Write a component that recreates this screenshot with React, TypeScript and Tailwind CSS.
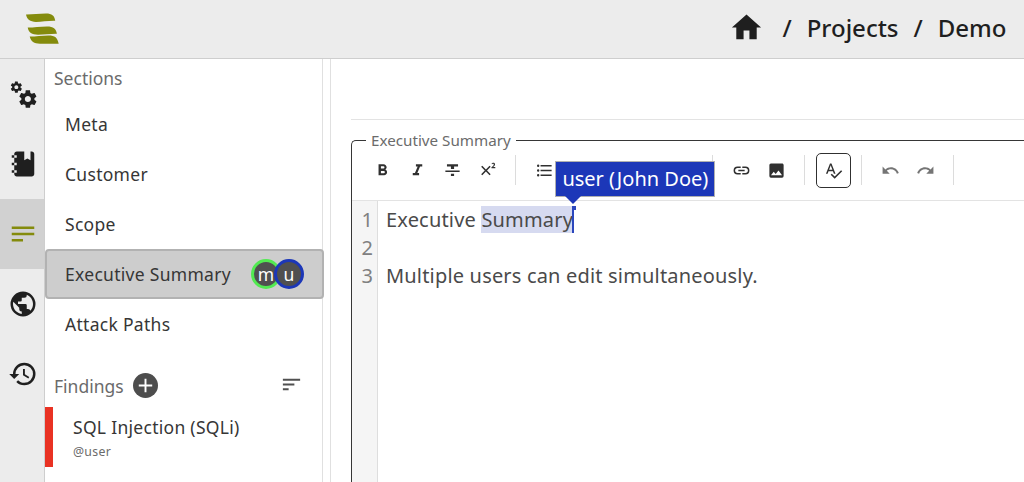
import type { ReactNode } from 'react';

const icons = {
  home: 'M10,20V14H14V20H19V12H22L12,3L2,12H5V20H10Z',
  cogs: 'M15.9,18.45C17.25,18.45 18.35,17.35 18.35,16C18.35,14.65 17.25,13.55 15.9,13.55C14.54,13.55 13.45,14.65 13.45,16C13.45,17.35 14.54,18.45 15.9,18.45M21.1,16.68L22.58,17.84C22.71,17.95 22.75,18.13 22.66,18.29L21.26,20.71C21.17,20.86 21,20.92 20.83,20.86L19.09,20.16C18.73,20.44 18.33,20.67 17.91,20.85L17.64,22.7C17.62,22.87 17.47,23 17.3,23H14.5C14.32,23 14.18,22.87 14.15,22.7L13.89,20.85C13.46,20.67 13.07,20.44 12.71,20.16L10.96,20.86C10.81,20.92 10.62,20.86 10.54,20.71L9.14,18.29C9.05,18.13 9.09,17.95 9.22,17.84L10.7,16.68L10.65,16L10.7,15.31L9.22,14.16C9.09,14.05 9.05,13.86 9.14,13.71L10.54,11.29C10.62,11.13 10.81,11.07 10.96,11.13L12.71,11.84C13.07,11.56 13.46,11.32 13.89,11.15L14.15,9.29C14.18,9.13 14.32,9 14.5,9H17.3C17.47,9 17.62,9.13 17.64,9.29L17.91,11.15C18.33,11.32 18.73,11.56 19.09,11.84L20.83,11.13C21,11.07 21.17,11.13 21.26,11.29L22.66,13.71C22.75,13.86 22.71,14.05 22.58,14.16L21.1,15.31L21.15,16L21.1,16.68M6.69,8.07C7.56,8.07 8.26,7.37 8.26,6.5C8.26,5.63 7.56,4.92 6.69,4.92C5.82,4.92 5.11,5.63 5.11,6.5C5.11,7.37 5.82,8.07 6.69,8.07M10.03,6.94L11,7.68C11.07,7.75 11.09,7.87 11.03,7.97L10.13,9.53C10.08,9.63 9.96,9.67 9.86,9.63L8.74,9.18L8,9.62L7.81,10.81C7.79,10.92 7.7,11 7.59,11H5.79C5.67,11 5.58,10.92 5.56,10.81L5.4,9.62L4.64,9.18L3.52,9.63C3.41,9.67 3.3,9.63 3.24,9.53L2.34,7.97C2.28,7.87 2.31,7.75 2.39,7.68L3.34,6.94L3.31,6.5L3.34,6.06L2.39,5.32C2.31,5.25 2.28,5.13 2.34,5.03L3.24,3.47C3.3,3.37 3.41,3.33 3.52,3.37L4.63,3.82L5.4,3.38L5.56,2.19C5.58,2.08 5.67,2 5.79,2H7.59C7.7,2 7.79,2.08 7.81,2.19L8,3.38L8.74,3.82L9.86,3.37C9.96,3.33 10.08,3.37 10.13,3.47L11.03,5.03C11.09,5.13 11.07,5.25 11,5.32L10.03,6.06L10.06,6.5L10.03,6.94Z',
  notebook: 'M3,7V5H5V4C5,2.89 5.9,2 7,2H13V9L15.5,7.5L18,9V2H19C20.05,2 21,2.95 21,4V20C21,21.05 20.05,22 19,22H7C5.95,22 5,21.05 5,20V19H3V17H5V13H3V11H5V7H3M7,11H5V13H7V11M7,7V5H5V7H7M7,19V17H5V19H7Z',
  text: 'M21,6V8H3V6H21M3,18H12V16H3V18M3,13H21V11H3V13Z',
  earth: 'M17.9,17.39C17.64,16.59 16.89,16 16,16H15V13A1,1 0 0,0 14,12H8V10H10A1,1 0 0,0 11,9V7H13A2,2 0 0,0 15,5V4.59C17.93,5.77 20,8.64 20,12C20,14.08 19.2,15.97 17.9,17.39M11,19.93C7.05,19.44 4,16.08 4,12C4,11.38 4.08,10.78 4.21,10.21L9,15V16A2,2 0 0,0 11,18M12,2A10,10 0 0,0 2,12A10,10 0 0,0 12,22A10,10 0 0,0 22,12A10,10 0 0,0 12,2Z',
  history: 'M13.5,8H12V13L16.28,15.54L17,14.33L13.5,12.25V8M13,3A9,9 0 0,0 4,12H1L4.96,16.03L9,12H6A7,7 0 0,1 13,5A7,7 0 0,1 20,12A7,7 0 0,1 13,19C11.07,19 9.32,18.21 8.06,16.94L6.64,18.36C8.27,20 10.5,21 13,21A9,9 0 0,0 22,12A9,9 0 0,0 13,3',
  plus: 'M19,13H13V19H11V13H5V11H11V5H13V11H19V13Z',
  sort: 'M3,13H15V11H3M3,6V8H21V6M3,18H9V16H3V18Z',
  bold: 'M13.5,15.5H10V12.5H13.5A1.5,1.5 0 0,1 15,14A1.5,1.5 0 0,1 13.5,15.5M10,6.5H13A1.5,1.5 0 0,1 14.5,8A1.5,1.5 0 0,1 13,9.5H10M15.6,10.79C16.57,10.11 17.25,9 17.25,8C17.25,5.74 15.5,4 13.25,4H7V18H14.04C16.14,18 17.75,16.3 17.75,14.21C17.75,12.69 16.89,11.39 15.6,10.79Z',
  italic: 'M10,4V7H12.21L8.79,15H6V18H14V15H11.79L15.21,7H18V4H10Z',
  strike: 'M3,14H21V12H3M5,4V7H10V10H14V7H19V4M10,19H14V16H10V19Z',
  superscript: 'M16,7.41L11.41,12L16,16.59L14.59,18L10,13.41L5.41,18L4,16.59L8.59,12L4,7.41L5.41,6L10,10.59L14.59,6L16,7.41M21.85,9H16.97V8L17.86,7.18C18.62,6.54 19.15,6 19.44,5.6C19.74,5.19 19.89,4.82 19.9,4.47C19.91,4.24 19.83,4.03 19.66,3.87C19.5,3.71 19.26,3.63 18.93,3.63C18.68,3.62 18.43,3.68 18.21,3.78L17.63,4.09L17.18,3C17.44,2.78 17.76,2.6 18.13,2.46C18.5,2.33 18.93,2.26 19.38,2.26C20.06,2.27 20.59,2.46 20.96,2.8C21.33,3.16 21.54,3.64 21.55,4.2C21.54,4.7 21.38,5.18 21.07,5.6C20.76,6.05 20.39,6.5 19.96,6.89L19.33,7.4V7.43H21.85V9Z',
  list: 'M7,5H21V7H7V5M7,13V11H21V13H7M4,4.5A1.5,1.5 0 0,1 5.5,6A1.5,1.5 0 0,1 4,7.5A1.5,1.5 0 0,1 2.5,6A1.5,1.5 0 0,1 4,4.5M4,10.5A1.5,1.5 0 0,1 5.5,12A1.5,1.5 0 0,1 4,13.5A1.5,1.5 0 0,1 2.5,12A1.5,1.5 0 0,1 4,10.5M7,19V17H21V19H7M4,16.5A1.5,1.5 0 0,1 5.5,18A1.5,1.5 0 0,1 4,19.5A1.5,1.5 0 0,1 2.5,18A1.5,1.5 0 0,1 4,16.5Z',
  link: 'M3.9,12C3.9,10.29 5.29,8.9 7,8.9H11V7H7A5,5 0 0,0 2,12A5,5 0 0,0 7,17H11V15.1H7C5.29,15.1 3.9,13.71 3.9,12M8,13H16V11H8V13M17,7H13V8.9H17C18.71,8.9 20.1,10.29 20.1,12C20.1,13.71 18.71,15.1 17,15.1H13V17H17A5,5 0 0,0 22,12A5,5 0 0,0 17,7Z',
  image: 'M8.5,13.5L11,16.5L14.5,12L19,18H5M21,19V5C21,3.89 20.1,3 19,3H5A2,2 0 0,0 3,5V19A2,2 0 0,0 5,21H19A2,2 0 0,0 21,19Z',
  spellcheck: 'M21.59,11.59L13.5,19.68L9.83,16L8.42,17.41L13.5,22.5L23,13M6.43,11L8.5,5.5L10.57,11M12.45,16H14.54L9.43,3H7.57L2.46,16H4.55L5.67,13H11.31L12.45,16Z',
  undo: 'M12.5,8C9.85,8 7.45,9 5.6,10.6L2,7V16H11L7.38,12.38C8.77,11.22 10.54,10.5 12.5,10.5C16.04,10.5 19.05,12.81 20.1,16L22.47,15.22C21.08,11.03 17.15,8 12.5,8Z',
  redo: 'M18.4,10.6C16.55,9 14.15,8 11.5,8C6.85,8 2.92,11.03 1.54,15.22L3.9,16C4.95,12.81 7.95,10.5 11.5,10.5C13.45,10.5 15.23,11.22 16.62,12.38L13,16H22V7L18.4,10.6Z',
};

type IconName = keyof typeof icons;

function Icon({ name, className }: { name: IconName; className: string }) {
  return (
    <svg viewBox="0 0 24 24" fill="currentColor" className={`shrink-0 ${className}`} aria-hidden="true">
      <path d={icons[name]} fillRule={name === 'image' ? 'evenodd' : 'nonzero'} />
    </svg>
  );
}

function Logo() {
  return (
    <svg viewBox="0 0 34 32" className="h-8 w-[34px] fill-[#848b0c]" aria-hidden="true">
      <path d="M1 1.6C7 1.7 14 .6 21 .6c6 0 8.300 2 9.200 7.100C23 7.500 17 8.900 11 8.900 5 8.900 2 6.500 1 1.600Z" />
      <path d="M2.700 14.600C9 14.600 15 13.400 22 13.400c6.500 0 9 2.200 9.900 7.400C25 20.700 19 21.800 13 21.800 7 21.800 3.500 19.500 2.700 14.600Z" />
      <path d="M4.700 23.600C11 23.600 17 22.500 23.500 22.500c6.500 0 9 2.200 10.200 8.300H15C9 30.800 6 28.500 4.700 23.600Z" />
    </svg>
  );
}

function RailItem({ name, active }: { name: IconName; active?: boolean }) {
  return (
    <button className={`flex h-[70px] w-full items-center pb-px pl-[7.5px] ${active ? 'bg-[#d1d1d1] text-[#848b0c]' : 'text-[#1f1f1f]'}`}>
      <Icon name={name} className="size-[30px]" />
    </button>
  );
}

function NavItem({ children }: { children: ReactNode }) {
  return <a className="flex h-[50px] items-center pl-5">{children}</a>;
}

function Tool({ name, muted }: { name: IconName; muted?: boolean }) {
  return (
    <button className={`flex h-[35px] w-[35px] shrink-0 items-center justify-center ${muted ? 'text-[#757575]' : 'text-[#303030]'}`}>
      <Icon name={name} className="size-[19px]" />
    </button>
  );
}

function Divider() {
  return <span className="h-[30px] w-px shrink-0 bg-[#dcdcdc]" />;
}

export default function App() {
  return (
    <div className="flex h-[482px] w-[1024px] flex-col overflow-hidden bg-white font-['Noto_Sans',sans-serif] text-[#363636]">
      <header className="flex h-[59px] shrink-0 items-center justify-between border-b border-[#cecece] bg-[#ececec] pr-[17.5px] pl-[25px]">
        <Logo />
        <nav className="flex items-center pb-[2px] text-2xl font-medium text-[#1f1f1f]">
          <Icon name="home" className="mb-[2px] size-[35px]" />
          <span className="ml-[18px]">/</span>
          <span className="ml-[15px]">Projects</span>
          <span className="ml-[15px]">/</span>
          <span className="ml-[15px]">Demo</span>
        </nav>
      </header>
      <div className="flex min-h-0 flex-1">
        <aside className="w-[45px] shrink-0 border-r border-[#cecece] bg-[#ececec]">
          <RailItem name="cogs" />
          <RailItem name="notebook" />
          <RailItem name="text" active />
          <RailItem name="earth" />
          <RailItem name="history" />
        </aside>
        <aside className="w-[278px] shrink-0 border-r border-[#e0e0e0] text-[17.5px] tracking-[0.29px]">
          <h2 className="flex h-10 items-center pb-[2px] pl-[9px] tracking-normal text-[#6b6b6b]">Sections</h2>
          <NavItem>Meta</NavItem>
          <NavItem>Customer</NavItem>
          <NavItem>Scope</NavItem>
          <a className="flex h-[50px] w-[279px] items-center rounded-[4px] border-2 border-[#b2b2b2] bg-[#cdcdcd] pl-[18px]">
            <span className="w-[186px]">Executive Summary</span>
            <span className="flex size-[30px] items-center justify-center rounded-full border-3 border-[#52ea52] bg-[#505050] tracking-normal text-white">m</span>
            <span className="-ml-[7px] flex size-[30px] items-center justify-center rounded-full border-3 border-[#1c37b8] bg-[#505050] tracking-normal text-white">u</span>
          </a>
          <NavItem>Attack Paths</NavItem>
          <div className="mt-[11px] flex h-[51px] items-center pl-[9px] text-[#6b6b6b]">
            <h2 className="w-[70px] pt-[2px] tracking-normal">Findings</h2>
            <button className="ml-[9px] flex size-[25px] items-center justify-center rounded-full bg-[#4d4d4d] text-white">
              <Icon name="plus" className="size-[23px]" />
            </button>
            <Icon name="sort" className="mb-[2px] ml-[121.5px] size-[23px] text-[#505050]" />
          </div>
          <a className="mt-[-4px] flex h-[60px] flex-col justify-center border-l-8 border-[#e93223] pl-5">
            <span className="leading-[27px]">SQL Injection (SQLi)</span>
            <span className="mt-px -mb-px text-[12.3px] leading-5 text-[#6b6b6b]">@user</span>
          </a>
        </aside>
        <main className="ml-[7px] flex min-w-0 flex-1 flex-col border-l border-[#e0e0e0] pl-5">
          <div className="h-[61px] shrink-0 border-b border-[#e3e3e3]" />
          <section className="relative mt-5 flex w-[690px] flex-1 flex-col rounded-tl-[5px] border-t border-l border-[#363636]">
            <span className="absolute -top-[12px] left-[14px] bg-white px-[5px] text-[15.2px] leading-[22px] text-[#6b6b6b]">Executive Summary</span>
            <div className="flex h-[60px] shrink-0 items-center border-b border-[#e3e3e3] pb-px pl-[13px]">
              <Tool name="bold" />
              <Tool name="italic" />
              <Tool name="strike" />
              <Tool name="superscript" />
              <span className="w-[10px]" />
              <Divider />
              <span className="w-[11px]" />
              <Tool name="list" />
              <span className="w-[150px]" />
              <Divider />
              <span className="w-[11px]" />
              <Tool name="link" />
              <Tool name="image" />
              <span className="w-[10px]" />
              <Divider />
              <button className="mr-[10px] ml-[11px] flex size-[35px] shrink-0 items-center justify-center rounded-[5px] border border-[#303030] text-[#303030]">
                <Icon name="spellcheck" className="size-[19px]" />
              </button>
              <Divider />
              <span className="w-[11px]" />
              <Tool name="undo" muted />
              <Tool name="redo" muted />
              <span className="w-[10px]" />
              <Divider />
            </div>
            <div className="flex min-h-0 flex-1 text-[20px] leading-7 text-[#4a4a4a]">
              <div className="flex w-[26px] shrink-0 flex-col items-end border-r border-[#dedede] bg-[#f5f5f5] pt-[5px] pr-1 text-[#808080]">
                <span>1</span>
                <span>2</span>
                <span>3</span>
              </div>
              <div className="flex flex-col pt-[5px] pl-2 whitespace-pre tracking-[0.18px]">
                <span className="flex h-7">
                  Executive{' '}
                  <span className="relative h-[27px] bg-[#d6daf0]">
                    Summary
                    <span className="absolute top-0 -right-px h-[27px] w-[2px] bg-[#2c47bd]" />
                    <span className="absolute top-0 -right-[3px] size-1 bg-[#2c47bd]" />
                    <span className="absolute -top-[45px] left-[74px] h-9 w-40 border border-[#b0b0b0] bg-[#1c37b8] text-center leading-[33px] tracking-normal text-white">
                      user (John Doe)
                    </span>
                    <svg viewBox="0 0 16 8" className="absolute -top-[10px] left-[84px] h-2 w-4 fill-[#1c37b8]">
                      <path d="M0 0H16L8 8Z" />
                    </svg>
                  </span>
                </span>
                <span className="h-7" />
                <span>Multiple users can edit simultaneously.</span>
              </div>
            </div>
          </section>
        </main>
      </div>
    </div>
  );
}
